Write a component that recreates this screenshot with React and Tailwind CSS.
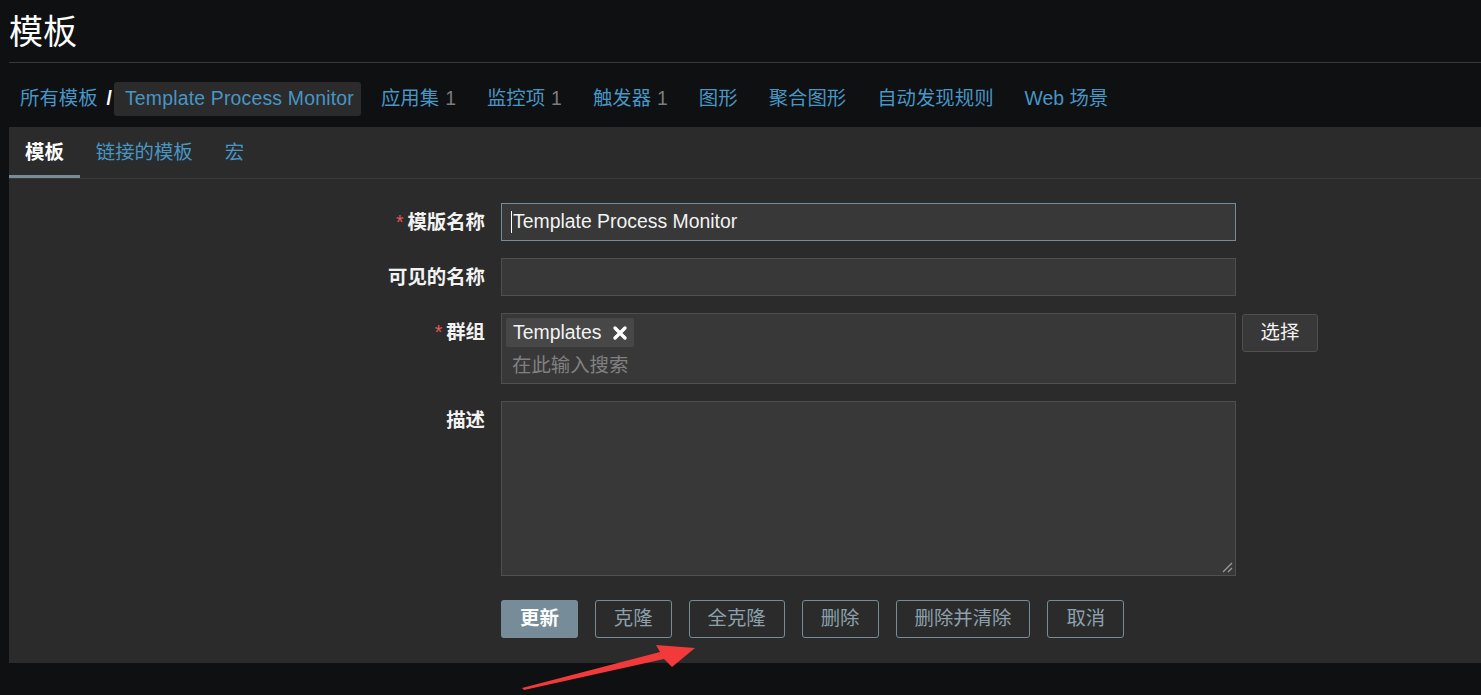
import React from "react"

const font = { fontFamily: '"Liberation Sans", "Noto Sans CJK SC", sans-serif' }

const navItems = [
  { label: "应用集", count: 1 },
  { label: "监控项", count: 1 },
  { label: "触发器", count: 1 },
  { label: "图形" },
  { label: "聚合图形" },
  { label: "自动发现规则" },
  { label: "Web 场景" },
]

const tabs = ["模板", "链接的模板", "宏"]

const FieldLabel = ({ required, children }) => (
  <div className="w-[476px] shrink-0 text-right leading-[38px] text-[19.4px] font-bold text-[#f2f2f2]">
    {required && <span className="text-[#e45959] mr-[4px] font-normal">*</span>}
    {children}
  </div>
)

const App = () => {
  return (
    <div className="relative min-h-[695px] bg-[#0e1012] pl-[9px] overflow-hidden" style={font}>
      {/* header */}
      <div className="border-b border-[#383838] pt-[12px] pb-[10px]">
        <h1 className="text-[34px] leading-[40px] text-white font-normal">模板</h1>
      </div>

      {/* breadcrumbs + nav */}
      <div className="flex items-center h-[34px] mt-[19px] mb-[11px] text-[19.4px] whitespace-nowrap">
        <span className="pl-[11px] text-[#4796c4]">所有模板</span>
        <span className="ml-[9px] mr-[2px] text-white font-bold">/</span>
        <span className="w-[247px] h-[34px] flex items-center px-[11px] rounded-[3px] bg-[#2b2b2b] text-[#4796c4] tracking-[0.2px]">
          Template Process Monitor
        </span>
        {navItems.map((item) => (
          <span key={item.label} className="ml-[9px] px-[11px] text-[#4796c4]">
            {item.label}
            {item.count && <span className="ml-[6px] text-[#7c7c7c]">{item.count}</span>}
          </span>
        ))}
      </div>

      {/* panel */}
      <div className="bg-[#2b2b2b] h-[536px]">
        <div className="flex border-b border-[#383838] text-[19.4px]">
          {tabs.map((tab, i) => (
            <div
              key={tab}
              className={`h-[51px] flex items-center pt-[4px] px-[16px] border-b-[3px] ${
                i === 0 ? "border-[#768d99] text-white font-bold" : "border-transparent text-[#4796c4]"
              }`}
            >
              {tab}
            </div>
          ))}
        </div>

        <div className="pt-[24px] flex flex-col gap-[17px] text-[19.4px]">
          <div className="flex gap-[16px]">
            <FieldLabel required>模版名称</FieldLabel>
            <div className="w-[735px] h-[38px] flex items-center border border-[#768d99] bg-[#383838] pl-[9px] text-[#f2f2f2]">
              <span className="w-px h-[22px] bg-white mr-[1px]" />
              Template Process Monitor
            </div>
          </div>

          <div className="flex gap-[16px]">
            <FieldLabel>可见的名称</FieldLabel>
            <div className="w-[735px] h-[38px] border border-[#4f4f4f] bg-[#383838]" />
          </div>

          <div className="flex gap-[16px]">
            <FieldLabel required>群组</FieldLabel>
            <div className="flex gap-[6px]">
              <div className="w-[735px] h-[71px] border border-[#4f4f4f] bg-[#383838] pt-[4px] pl-[4px]">
                <span className="inline-flex items-center h-[29px] pl-[7px] pr-[6px] rounded-[2px] bg-[#474747] text-[#f2f2f2]">
                  Templates
                  <svg className="ml-[11px] w-[16px] h-[16px]" viewBox="0 0 16 16">
                    <path d="M3 3 L13 13 M13 3 L3 13" stroke="#ffffff" strokeWidth="3.4" strokeLinecap="round" />
                  </svg>
                </span>
                <div className="pl-[6px] mt-[7px] leading-[22px] text-[#808080]">在此输入搜索</div>
              </div>
              <button className="w-[76px] h-[38px] mt-px border border-[#4f4f4f] bg-[#383838] rounded-[3px] text-[#f2f2f2]">
                选择
              </button>
            </div>
          </div>

          <div className="flex gap-[16px]">
            <FieldLabel>描述</FieldLabel>
            <div className="relative w-[735px] h-[175px] border border-[#4f4f4f] bg-[#383838]">
              <svg className="absolute right-[2px] bottom-[2px] w-[12px] h-[12px]" viewBox="0 0 12 12">
                <path d="M11 2 L2 11 M11 7 L7 11" stroke="#9a9a9a" strokeWidth="1.3" />
              </svg>
            </div>
          </div>

          <div className="flex gap-[17px] mt-[7px] pl-[492px]">
            <button className="h-[38px] px-[19px] rounded-[3px] bg-[#768d99] text-white font-bold">更新</button>
            {["克隆", "全克隆", "删除", "删除并清除", "取消"].map((b) => (
              <button
                key={b}
                className="h-[38px] px-[18px] rounded-[3px] border border-[#768d99] text-[#8ca0ab]"
              >
                {b}
              </button>
            ))}
          </div>
        </div>
      </div>

      {/* annotation arrow */}
      <svg className="absolute left-0 top-0 pointer-events-none" width="1481" height="695">
        <polygon points="522,688 660,652 656,645 695,648 672,667 664,659 524,690" fill="#f23a3a" />
      </svg>
    </div>
  )
}

export default App
